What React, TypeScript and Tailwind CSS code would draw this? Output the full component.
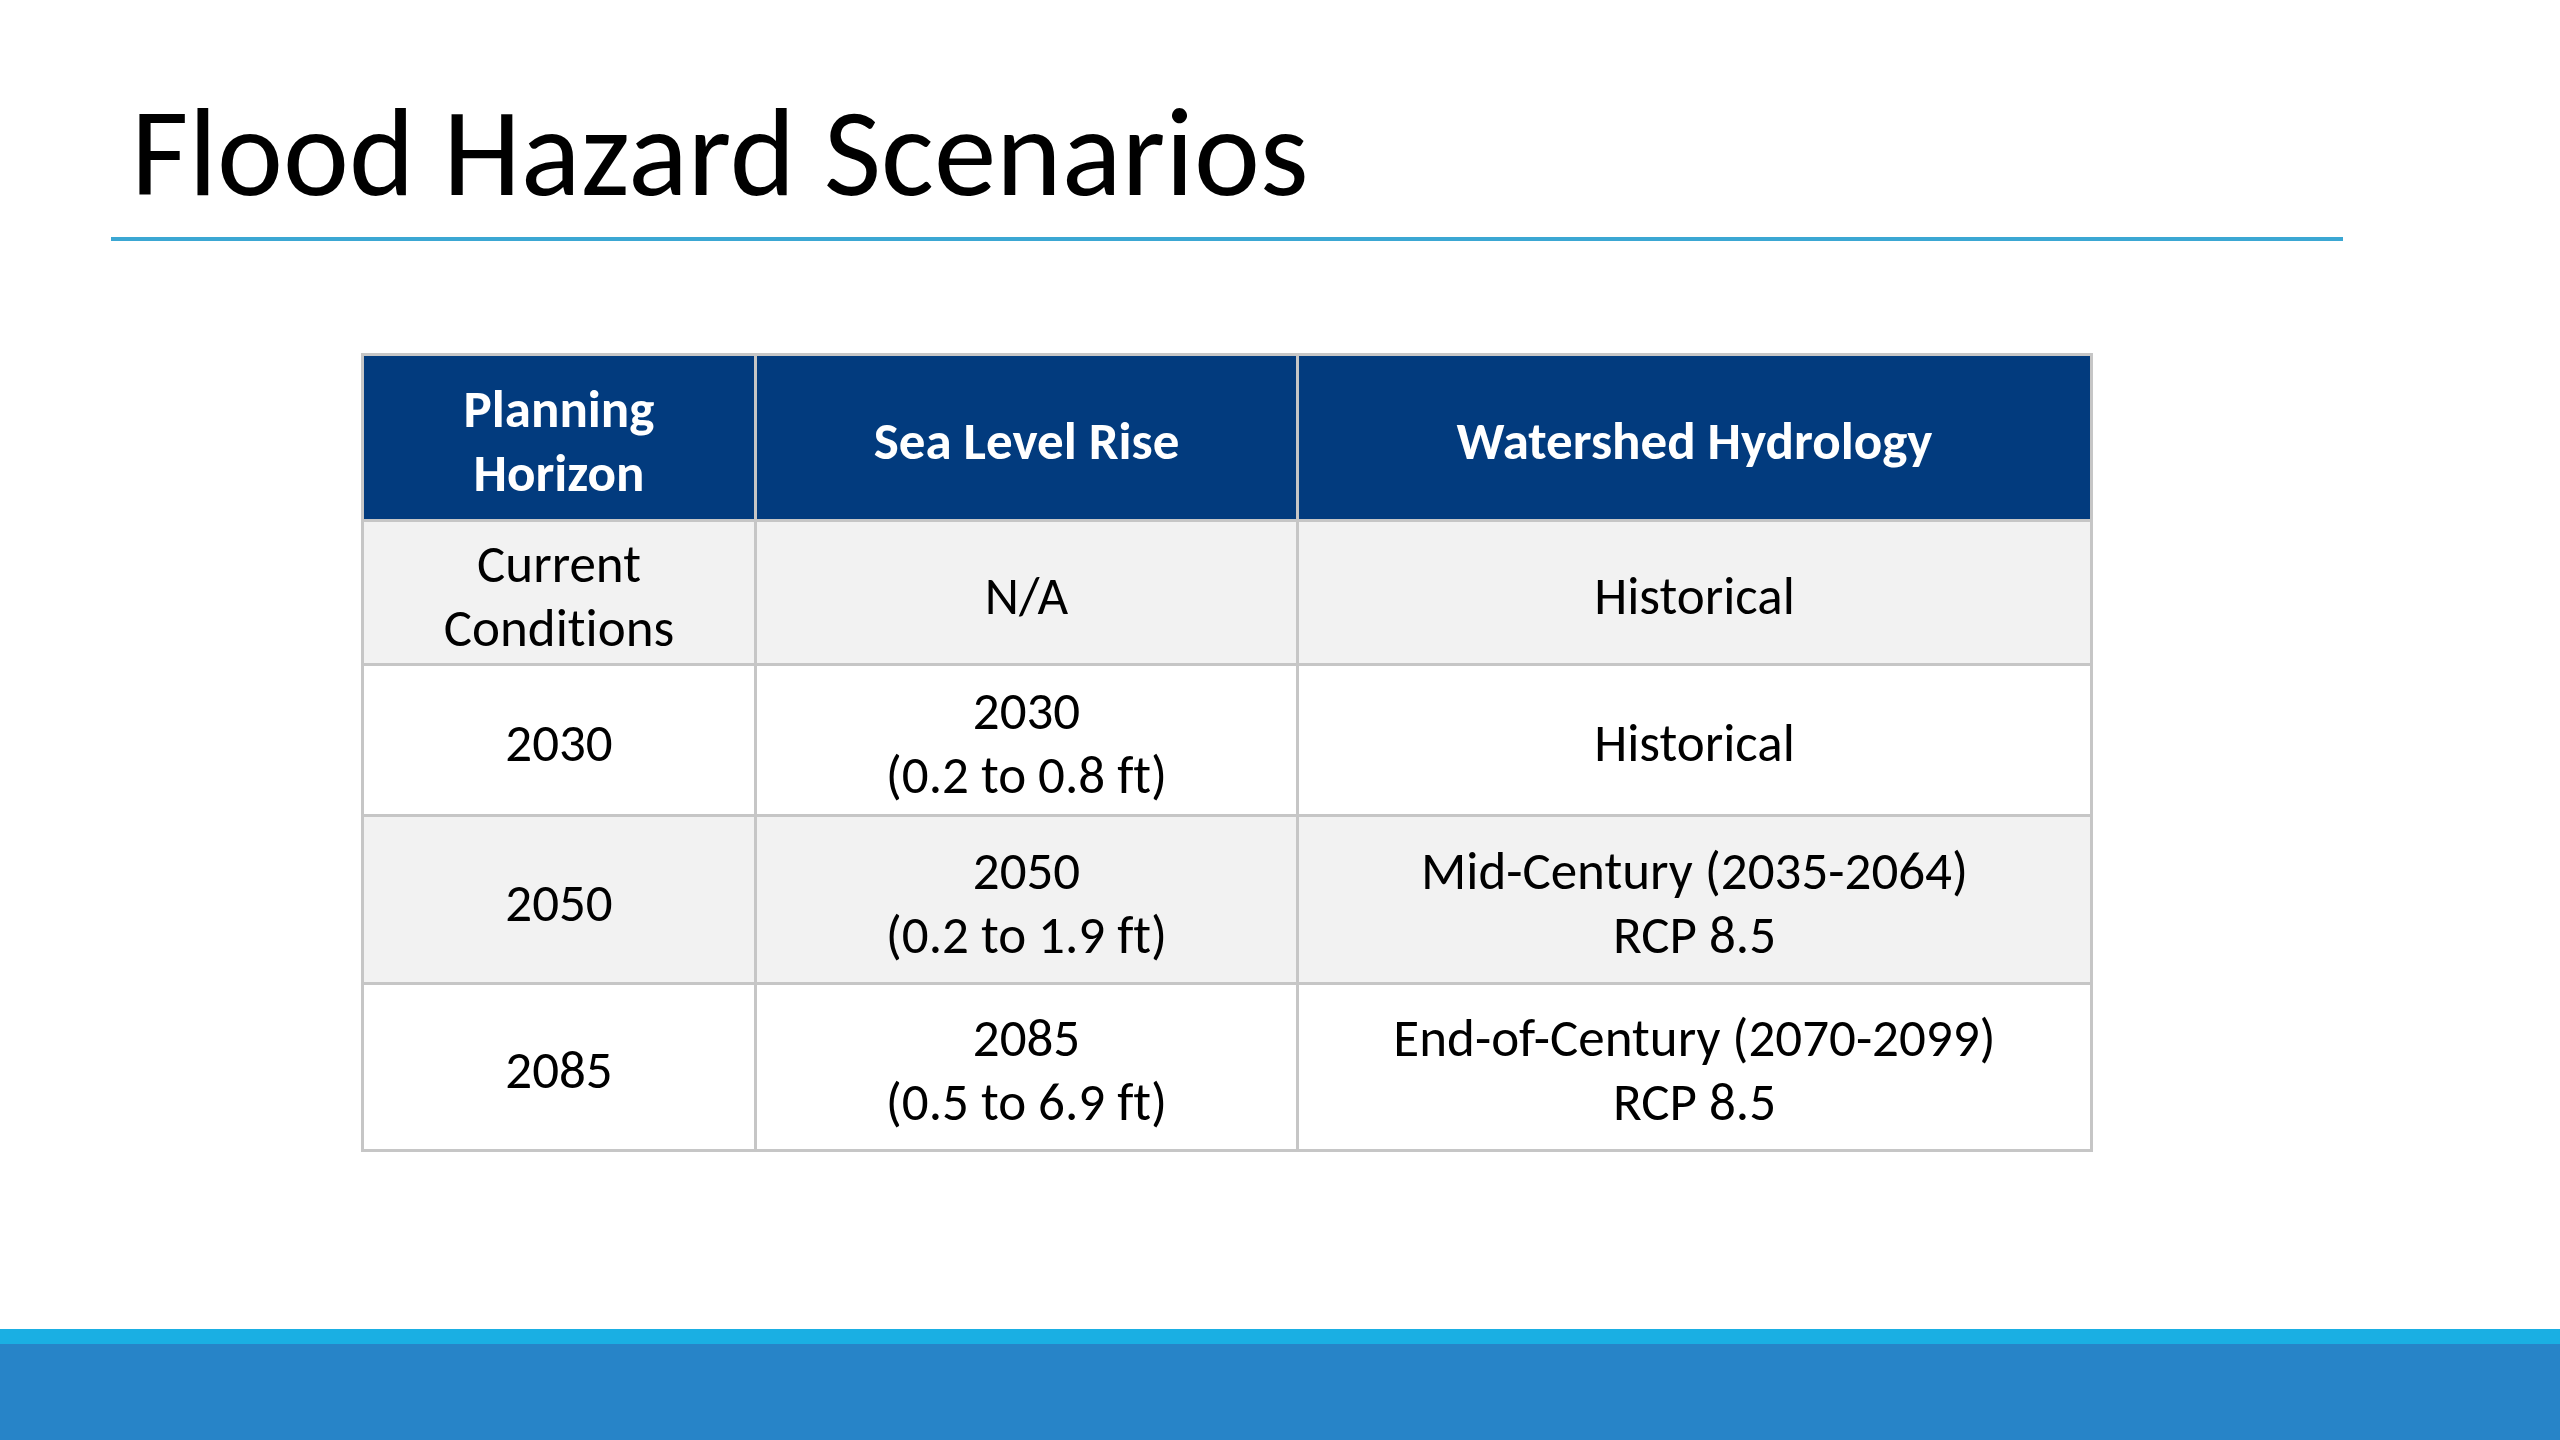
const rows = [
  { plan: ['Current', 'Conditions'], slr: ['N/A'], hydro: ['Historical'], shaded: true, h: 'h-[141px]' },
  { plan: ['2030'], slr: ['2030', '(0.2 to 0.8 ft)'], hydro: ['Historical'], shaded: false, h: 'h-[148px]' },
  { plan: ['2050'], slr: ['2050', '(0.2 to 1.9 ft)'], hydro: ['Mid-Century (2035-2064)', 'RCP 8.5'], shaded: true, h: 'h-[165px]' },
  { plan: ['2085'], slr: ['2085', '(0.5 to 6.9 ft)'], hydro: ['End-of-Century (2070-2099)', 'RCP 8.5'], shaded: false, h: 'h-[164px]' },
];

function Cell({ lines, className }: { lines: string[]; className: string }) {
  return (
    <div className={`flex flex-col items-center justify-center text-center pt-[6px] ${className}`}>
      {lines.map((l) => (
        <span key={l}>{l}</span>
      ))}
    </div>
  );
}

export default function App() {
  return (
    <div className="w-[2560px] h-[1440px] bg-white flex flex-col font-[Carlito,Lato,sans-serif] [font-variant-ligatures:none] text-black overflow-hidden">
      <header className="pt-[90px] pl-[131px]">
        <h1 className="text-[125px] leading-[125px] font-normal">Flood Hazard Scenarios</h1>
      </header>
      <div className="mt-[22px] ml-[111px] w-[2232px] h-[4px] bg-[#3ba7d3]" />

      <div className="mt-[112px] ml-[361px] w-[1732px] bg-[#c6c6c6] p-[3px] grid grid-cols-[390px_539px_791px] gap-[3px] text-[53px] leading-[64px]">
        <Cell lines={['Planning', 'Horizon']} className="h-[163px] bg-[#023b7e] text-white font-bold" />
        <Cell lines={['Sea Level Rise']} className="h-[163px] bg-[#023b7e] text-white font-bold" />
        <Cell lines={['Watershed Hydrology']} className="h-[163px] bg-[#023b7e] text-white font-bold" />
        {rows.map((r) => {
          const bg = r.shaded ? 'bg-[#f2f2f2]' : 'bg-white';
          return [
            <Cell key={`${r.plan[0]}-a`} lines={r.plan} className={`${r.h} ${bg}`} />,
            <Cell key={`${r.plan[0]}-b`} lines={r.slr} className={`${r.h} ${bg}`} />,
            <Cell key={`${r.plan[0]}-c`} lines={r.hydro} className={`${r.h} ${bg}`} />,
          ];
        })}
      </div>

      <footer className="mt-auto">
        <div className="h-[15px] bg-[#1aafe3]" />
        <div className="h-[96px] bg-[#2784c8]" />
      </footer>
    </div>
  );
}
